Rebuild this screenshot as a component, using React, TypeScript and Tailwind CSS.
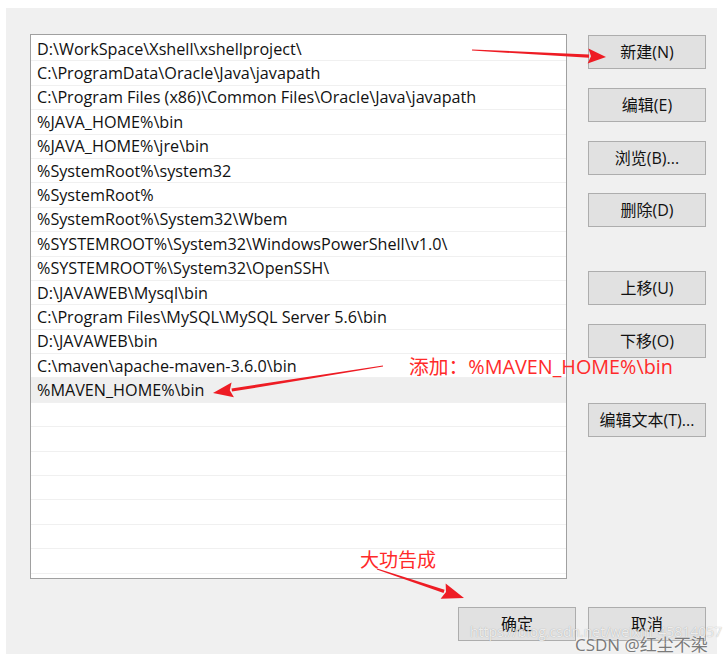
import React from "react";

const paths = [
  "D:\\WorkSpace\\Xshell\\xshellproject\\",
  "C:\\ProgramData\\Oracle\\Java\\javapath",
  "C:\\Program Files (x86)\\Common Files\\Oracle\\Java\\javapath",
  "%JAVA_HOME%\\bin",
  "%JAVA_HOME%\\jre\\bin",
  "%SystemRoot%\\system32",
  "%SystemRoot%",
  "%SystemRoot%\\System32\\Wbem",
  "%SYSTEMROOT%\\System32\\WindowsPowerShell\\v1.0\\",
  "%SYSTEMROOT%\\System32\\OpenSSH\\",
  "D:\\JAVAWEB\\Mysql\\bin",
  "C:\\Program Files\\MySQL\\MySQL Server 5.6\\bin",
  "D:\\JAVAWEB\\bin",
  "C:\\maven\\apache-maven-3.6.0\\bin",
  "%MAVEN_HOME%\\bin",
];

const font = { fontFamily: '"Open Sans", "Noto Sans CJK SC", sans-serif' };

function Button({ label, className = "" }: { label: string; className?: string }) {
  return (
    <div
      className={
        "flex h-[34px] w-[118px] items-center justify-center border border-[#adadad] bg-[#e1e1e1] text-[16px] text-[#111] " +
        className
      }
    >
      {label}
    </div>
  );
}

// arrow drawn as a tapered shaft plus a triangular head
function arrowPoints(x1: number, y1: number, x2: number, y2: number, headLen: number, headW: number) {
  const dx = x2 - x1;
  const dy = y2 - y1;
  const len = Math.hypot(dx, dy);
  const ux = dx / len;
  const uy = dy / len;
  const nx = -uy;
  const ny = ux;
  const bx = x2 - ux * headLen;
  const by = y2 - uy * headLen;
  const shaft = [
    [x1 + nx * 0.6, y1 + ny * 0.6],
    [bx + ux + nx * 1.6, by + uy + ny * 1.6],
    [bx + ux - nx * 1.6, by + uy - ny * 1.6],
    [x1 - nx * 0.6, y1 - ny * 0.6],
  ];
  const head = [
    [bx + nx * headW, by + ny * headW],
    [x2, y2],
    [bx - nx * headW, by - ny * headW],
    [bx + ux * 3, by + uy * 3],
  ];
  const s = (p: number[][]) => p.map((q) => q.join(",")).join(" ");
  return { shaft: s(shaft), head: s(head) };
}

const arrows = [
  arrowPoints(472, 50, 606, 57, 18, 7.5),
  arrowPoints(383, 366, 213, 393, 20, 7.5),
  arrowPoints(377, 569, 464, 598, 22, 8),
];

export default function App() {
  return (
    <div className="relative h-[663px] w-[726px] overflow-hidden bg-white pl-[6px] pt-[8px]" style={font}>
      <div className="flex h-[646px] w-[711px] flex-col bg-[#f0f0f0]">
        <div className="flex">
          {/* path list */}
          <div className="ml-[24px] mt-[26px] h-[545px] w-[537px] overflow-hidden border border-[#a0a0a0] bg-white pt-[2px]">
            {paths.map((p, i) => (
              <div
                key={p}
                className={
                  "flex h-[24.4px] items-center border-b border-[#f0f0f0] pl-[6px] text-[16.2px] leading-none text-[#111] " +
                  (i === paths.length - 1 ? "bg-[#efefef]" : "")
                }
              >
                {p}
              </div>
            ))}
            {Array.from({ length: 8 }).map((_, i) => (
              <div key={i} className="h-[24.4px] border-b border-[#f0f0f0]" />
            ))}
          </div>
          {/* side buttons */}
          <div className="ml-[21px] mt-[27px] flex flex-col">
            <Button label="新建(N)" />
            <Button label="编辑(E)" className="mt-[19px]" />
            <Button label="浏览(B)..." className="mt-[19px]" />
            <Button label="删除(D)" className="mt-[18px]" />
            <Button label="上移(U)" className="mt-[44px]" />
            <Button label="下移(O)" className="mt-[19px]" />
            <Button label="编辑文本(T)..." className="mt-[45px]" />
          </div>
        </div>
        <div className="ml-[452px] mt-[28px] flex gap-[12px]">
          <Button label="确定" />
          <Button label="取消" />
        </div>
      </div>

      {/* annotations */}
      <svg className="pointer-events-none absolute left-0 top-0" width="726" height="663">
        {arrows.map((a, i) => (
          <g key={i} fill="#ee1c24">
            <polygon points={a.shaft} />
            <polygon points={a.head} />
          </g>
        ))}
      </svg>
      <div className="absolute left-[409px] top-[354px] text-[19.8px] leading-[26px] text-[#ff2a2a]">
        添加：%MAVEN_HOME%\bin
      </div>
      <div className="absolute left-[360px] top-[547px] text-[19px] leading-[26px] text-[#ff2a2a]">大功告成</div>

      {/* watermarks */}
      <div
        className="absolute left-[470px] top-[623px] text-[14px] leading-[18px] text-white/80"
        style={{ textShadow: "0 0 1px rgba(0,0,0,0.35)" }}
      >
        https://blog.csdn.net/weixin_45814057
      </div>
      <div
        className="absolute left-[575px] top-[634px] text-[17px] leading-[22px] text-[#7a7a7a]"
        style={{ textShadow: "0 0 2px #fff" }}
      >
        CSDN @红尘不染
      </div>
    </div>
  );
}
